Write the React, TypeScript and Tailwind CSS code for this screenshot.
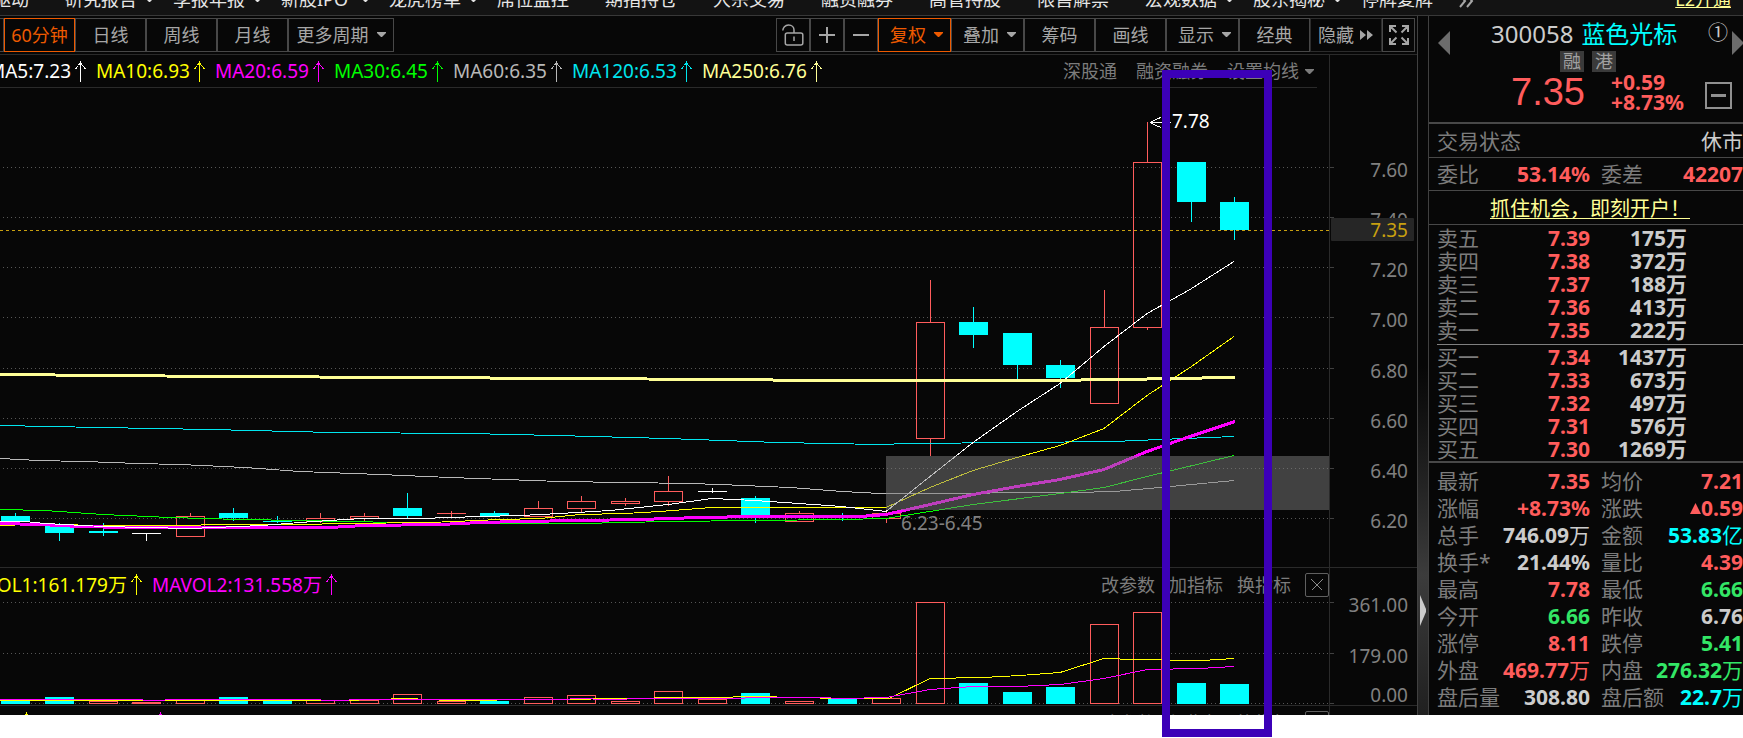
import type { ReactNode } from 'react'

const UP = '#ff5c5c'
const DOWN = '#00ffff'

type Kind = 'up' | 'down' | 'flat'

interface Bar {
  x: number
  kind: Kind
  high: number
  top: number
  bottom: number
  low: number
  volKind: Kind
  volTop: number
}

// x, candle kind, high, body top, body bottom, low, volume kind, volume top
const RAW: [number, Kind, number, number, number, number, Kind, number][] = [
  [15, 'down', 513, 516, 521, 521, 'down', 701],
  [59, 'down', 523, 525, 533, 541, 'down', 697],
  [103, 'down', 523, 531, 533, 536, 'up', 701],
  [146, 'flat', 533, 533, 534, 541, 'up', 702],
  [190, 'up', 513, 516, 537, 537, 'up', 700],
  [233, 'down', 508, 513, 518, 521, 'down', 697],
  [277, 'down', 516, 521, 522, 523, 'down', 701],
  [320, 'up', 513, 518, 522, 523, 'up', 700],
  [364, 'up', 513, 516, 519, 521, 'up', 700],
  [407, 'down', 493, 508, 516, 518, 'up', 694],
  [451, 'up', 511, 513, 514, 518, 'up', 701],
  [494, 'down', 511, 513, 516, 516, 'down', 701],
  [538, 'up', 501, 508, 517, 517, 'up', 697],
  [581, 'up', 496, 501, 509, 513, 'up', 695],
  [625, 'up', 498, 501, 504, 506, 'up', 701],
  [668, 'up', 476, 491, 502, 506, 'up', 691],
  [712, 'flat', 488, 491, 492, 493, 'up', 699],
  [755, 'down', 496, 498, 518, 523, 'down', 693],
  [799, 'up', 511, 513, 522, 522, 'up', 701],
  [842, 'down', 513, 517, 518, 521, 'down', 698],
  [886, 'up', 511, 513, 519, 523, 'up', 698],
  [930, 'up', 280, 322, 439, 456, 'up', 602],
  [973, 'down', 307, 322, 335, 348, 'down', 683],
  [1017, 'down', 333, 333, 365, 379, 'down', 692],
  [1060, 'down', 360, 365, 378, 388, 'down', 687],
  [1104, 'up', 290, 327, 404, 404, 'up', 624],
  [1147, 'up', 122, 162, 328, 330, 'up', 612],
  [1191, 'down', 162, 162, 202, 222, 'down', 683],
  [1234, 'down', 197, 202, 230, 240, 'down', 684],
]

const BARS: Bar[] = RAW.map(([x, kind, high, top, bottom, low, volKind, volTop]) => ({
  x, kind, high, top, bottom, low, volKind, volTop,
}))

const MA_LINES = [
  { color: '#b8b8b8', width: 1, points: '0,458 38,460 82,461 114,462 136,463 180,464 245,467 300,471 380,474 450,477 560,481 625,482 690,483 720,484 790,487 842,491 880,493 908,493 1075,492 1114,491 1160,487 1234,480' },
  { color: '#00e5ee', width: 1, points: '0,425 100,427 210,429 333,432 467,433 556,435 667,438 778,442 880,444 908,443 1017,442 1114,441 1160,439 1234,436' },
  { color: '#00ff00', width: 1, points: '0,509 45,510 103,514 170,517 240,519 300,520 345,521 400,522 450,523 580,523 668,521 755,520 842,519 886,518 973,504 1060,493 1104,487 1147,476 1234,455' },
  { color: '#ffff00', width: 1, points: '0,525 30,524 125,525 190,525 212,524 300,524 345,523 430,522 500,519 540,518 580,514 625,513 660,511 712,507 860,507 886,507 930,487 973,470 1017,457 1060,445 1104,428 1147,395 1190,367 1234,336' },
  { color: '#ff00ff', width: 3, points: '0,523 40,524 80,526 125,527 330,527 364,525 440,524 480,522 520,521 580,520 640,519 668,518 700,517 755,516 860,516 886,514 930,504 973,494 1017,486 1060,479 1104,469 1147,451 1190,436 1235,421' },
  { color: '#ffffff', width: 1, points: '0,521 25,521 45,523 103,526 190,528 262,525 300,522 345,519 364,518 420,518 450,517 480,516 520,515 560,513 610,510 668,504 712,498 755,500 799,503 842,506 886,511 930,476 973,442 1017,411 1060,383 1104,346 1147,313 1190,289 1234,261' },
  { color: '#ffff96', width: 3, points: '0,374 110,375 220,376 417,377 560,378 733,379 811,380 1038,380 1125,379 1170,378 1235,377' },
]

const VOL_LINES = [
  { color: '#ffff00', points: '0,700 190,700 343,700 407,698 450,700 640,698 668,697 712,697 755,696 842,698 889,698 930,678 983,677 1020,675 1060,672 1104,658 1135,659 1202,660 1234,658' },
  { color: '#ff00ff', points: '0,699 125,699 160,700 170,699 299,699 343,700 355,699 560,699 580,698 605,699 650,698 730,698 760,697 820,697 842,698 886,697 930,689 973,686 1017,686 1060,684 1104,678 1147,669 1200,668 1234,666' },
]

const PRICE_TICKS = [
  { y: 167, label: '7.60' },
  { y: 217, label: '7.40' },
  { y: 267, label: '7.20' },
  { y: 317, label: '7.00' },
  { y: 368, label: '6.80' },
  { y: 418, label: '6.60' },
  { y: 468, label: '6.40' },
  { y: 518, label: '6.20' },
]

const VOL_TICKS = [
  { y: 602, textY: 612, label: '361.00' },
  { y: 653, textY: 663, label: '179.00' },
  { y: 703, textY: 702, label: '0.00' },
]

const MENU = [
  { label: '题材驱动' },
  { label: '研究报告', arrow: true },
  { label: '季报年报', arrow: true },
  { label: '新股IPO', arrow: true },
  { label: '龙虎榜单', arrow: true },
  { label: '席位监控' },
  { label: '期指持仓' },
  { label: '大宗交易' },
  { label: '融资融券' },
  { label: '高管持股' },
  { label: '限售解禁' },
  { label: '宏观数据', arrow: true },
  { label: '股东揭秘', arrow: true },
  { label: '停牌复牌' },
]

const MA_LEGEND = [
  { text: 'MA5:7.23', cls: 'w-[108px] text-white' },
  { text: 'MA10:6.93', cls: 'w-[119px] text-[#ffff00]' },
  { text: 'MA20:6.59', cls: 'w-[119px] text-[#ff00ff]' },
  { text: 'MA30:6.45', cls: 'w-[119px] text-[#00ff00]' },
  { text: 'MA60:6.35', cls: 'w-[119px] text-[#b8b8b8]' },
  { text: 'MA120:6.53', cls: 'w-[130px] text-[#00e5ee]' },
  { text: 'MA250:6.76', cls: 'w-[130px] text-[#ffff96]' },
]

const ASKS = [
  ['卖五', '7.39', '175万'],
  ['卖四', '7.38', '372万'],
  ['卖三', '7.37', '188万'],
  ['卖二', '7.36', '413万'],
  ['卖一', '7.35', '222万'],
]

const BIDS = [
  ['买一', '7.34', '1437万'],
  ['买二', '7.33', '673万'],
  ['买三', '7.32', '497万'],
  ['买四', '7.31', '576万'],
  ['买五', '7.30', '1269万'],
]

const RED = 'text-[#ff5c5c]'
const GREEN = 'text-[#33e666]'
const GREY = 'text-[#cccccc]'
const CYAN = 'text-[#00ffff]'

const STATS: { label: string; value: string; unit?: string; cls: string; rise?: boolean }[] = [
  { label: '最新', value: '7.35', cls: RED },
  { label: '均价', value: '7.21', cls: RED },
  { label: '涨幅', value: '+8.73%', cls: RED },
  { label: '涨跌', value: '0.59', cls: RED, rise: true },
  { label: '总手', value: '746.09', unit: '万', cls: GREY },
  { label: '金额', value: '53.83', unit: '亿', cls: CYAN },
  { label: '换手*', value: '21.44%', cls: GREY },
  { label: '量比', value: '4.39', cls: RED },
  { label: '最高', value: '7.78', cls: RED },
  { label: '最低', value: '6.66', cls: GREEN },
  { label: '今开', value: '6.66', cls: GREEN },
  { label: '昨收', value: '6.76', cls: GREY },
  { label: '涨停', value: '8.11', cls: RED },
  { label: '跌停', value: '5.41', cls: GREEN },
  { label: '外盘', value: '469.77', unit: '万', cls: RED },
  { label: '内盘', value: '276.32', unit: '万', cls: GREEN },
  { label: '盘后量', value: '308.80', cls: GREY },
  { label: '盘后额', value: '22.7', unit: '万', cls: CYAN },
]

function Caret() {
  return (
    <svg width="9" height="5" viewBox="0 0 9 5" className="shrink-0" fill="currentColor">
      <path d="M0 0H9V1L5 5H4L0 1Z" />
    </svg>
  )
}

function UpArrow() {
  return (
    <svg width="11" height="21" viewBox="0 0 11 21" className="shrink-0" fill="none" stroke="currentColor" shapeRendering="crispEdges">
      <path d="M5.5 0V21M5.5 1L3.5 4.5L0.5 8M5.5 1L7.5 4.5L10.5 8" />
    </svg>
  )
}

function ToolButton({ cls, active, children, label }: { cls: string; active?: boolean; children: ReactNode; label?: string }) {
  return (
    <button
      type="button"
      aria-label={label}
      className={`flex h-[34px] shrink-0 items-center justify-center gap-2 whitespace-nowrap border ${cls} ${
        active ? 'border-[#ee5a00] text-[#ee5a00]' : 'border-[#484848] text-[#a6a6a6]'
      }`}
    >
      {children}
    </button>
  )
}

function Candle({ b }: { b: Bar }) {
  const color = b.kind === 'up' ? UP : b.kind === 'down' ? DOWN : '#ffffff'
  const h = b.bottom - b.top
  return (
    <g>
      {b.high < b.top && <rect x={b.x} y={b.high} width={1} height={b.top - b.high} fill={color} />}
      {b.low > b.bottom && <rect x={b.x} y={b.bottom} width={1} height={b.low - b.bottom} fill={color} />}
      {b.kind === 'up' && h > 1 ? (
        <rect x={b.x - 13.5} y={b.top + 0.5} width={28} height={h - 1} fill="none" stroke={color} />
      ) : (
        <rect x={b.x - 14} y={b.top} width={29} height={h} fill={color} />
      )}
    </g>
  )
}

function GridLines({ ys }: { ys: number[] }) {
  return (
    <>
      {ys.map((y) => (
        <line key={y} x1="3" x2="1329" y1={y + 0.5} y2={y + 0.5} stroke="#565656" strokeDasharray="1 3" />
      ))}
    </>
  )
}

function PriceChart() {
  return (
    <svg viewBox="0 88 1329 479" preserveAspectRatio="none" className="block h-[479px] w-full" shapeRendering="crispEdges">
      <GridLines ys={PRICE_TICKS.map((t) => t.y)} />
      {BARS.map((b) => (
        <Candle key={b.x} b={b} />
      ))}
      {MA_LINES.map((l) => (
        <polyline key={l.color} points={l.points} transform="translate(0 .5)" fill="none" stroke={l.color} strokeWidth={l.width} />
      ))}
      <line x1="0" x2="1329" y1="230.5" y2="230.5" stroke="#c8a010" strokeDasharray="3 3" />
      <rect x="886" y="456" width="443" height="54" fill="#7b7b7b" fillOpacity="0.5" />
      <path d="M1150 122.5H1171M1161 117.5L1155.5 119.5L1150.5 122.5L1155.5 125.5L1161 127.5" fill="none" stroke="#ffffff" />
      <text x="1172" y="128" fontSize="19" fill="#ffffff">7.78</text>
      <text x="901" y="530" fontSize="19" fill="#808080">6.23-6.45</text>
    </svg>
  )
}

function VolumeChart() {
  return (
    <svg viewBox="0 601 1329 104" preserveAspectRatio="none" className="block h-[104px] w-full" shapeRendering="crispEdges">
      <GridLines ys={VOL_TICKS.map((t) => t.y)} />
      {BARS.map((b) =>
        b.volKind === 'up' ? (
          <rect key={b.x} x={b.x - 13.5} y={b.volTop + 0.5} width={28} height={703 - b.volTop} fill="none" stroke={UP} />
        ) : (
          <rect key={b.x} x={b.x - 14} y={b.volTop} width={29} height={704 - b.volTop} fill={DOWN} />
        ),
      )}
      {VOL_LINES.map((l) => (
        <polyline key={l.color} points={l.points} transform="translate(0 .5)" fill="none" stroke={l.color} />
      ))}
    </svg>
  )
}

function PaneHeader({ children }: { children: ReactNode }) {
  return (
    <div className="flex h-[33px] items-center overflow-hidden whitespace-nowrap">
      {children}
      <div className="ml-auto flex items-center gap-[14px] text-[#7c7c7c]">
        <button type="button">改参数</button>
        <button type="button">加指标</button>
        <button type="button">换指标</button>
        <button type="button" aria-label="关闭" className="flex h-6 w-6 items-center justify-center rounded-xs border border-[#606060]">
          <svg width="12" height="12" viewBox="0 0 12 12" stroke="#8c8c8c" shapeRendering="crispEdges">
            <path d="M0.5 0.5L11.5 11.5M11.5 0.5L0.5 11.5" />
          </svg>
        </button>
      </div>
    </div>
  )
}

function BookTable({ rows, name }: { rows: string[][]; name: string }) {
  return (
    <table aria-label={name} className="w-[258px] table-fixed border-collapse leading-[23px]">
      <tbody>
        {rows.map(([label, price, vol]) => (
          <tr key={label} className="h-[23px]">
            <th scope="row" className="w-[80px] p-0 pl-2 text-left font-normal text-[#7c7c7c]">{label}</th>
            <td className="p-0 text-right font-bold text-[#ff5c5c]">{price}</td>
            <td className="w-[97px] p-0 text-right font-bold text-[#cccccc]">{vol}</td>
          </tr>
        ))}
      </tbody>
    </table>
  )
}

function TopMenu() {
  return (
    <nav className="flex h-4 items-end overflow-hidden whitespace-nowrap border-b border-[#383838] bg-[#131313] pb-1 leading-6 text-[#e6e6e6]">
      <div className="-ml-[43px] flex shrink-0">
        {MENU.map((m) => (
          <a key={m.label} href="#" className="flex w-[108px] shrink-0 items-center">
            <span className="w-[80px]">{m.label}</span>
            {m.arrow && <Caret />}
          </a>
        ))}
      </div>
      <span className="-ml-[10px] text-[#a6a6a6]">
        <svg width="16" height="20" viewBox="0 0 16 20" fill="none" stroke="currentColor" strokeWidth="2">
          <path d="M1 4L6 10L1 16M8 4L13 10L8 16" />
        </svg>
      </span>
      <a href="#" className="ml-auto mr-3 text-[#ffff96] underline">L2开通</a>
    </nav>
  )
}

function Toolbar() {
  return (
    <div className="flex h-[39px] items-center border-b border-[#2a2a2a] pb-px">
      <div className="h-[34px] w-1 border-y border-r border-[#484848]" />
      <ToolButton cls="w-[71px]" active>60分钟</ToolButton>
      <ToolButton cls="w-[71px]">日线</ToolButton>
      <ToolButton cls="w-[71px]">周线</ToolButton>
      <ToolButton cls="w-[71px]">月线</ToolButton>
      <ToolButton cls="w-[106px]">更多周期<Caret /></ToolButton>
      <div className="ml-auto mr-[2px] flex">
        <ToolButton cls="w-[34px]" label="锁定">
          <svg width="22" height="24" viewBox="0 0 22 24" fill="none" stroke="currentColor" strokeWidth="1.5">
            <path d="M0.8 7.5C1 5 3 2 6.5 2C10 2 12 4.5 12 7V10" />
            <rect x="3.3" y="10" width="17.5" height="12" rx="2" />
            <path d="M12 13.5V18" />
          </svg>
        </ToolButton>
        <ToolButton cls="w-[34px]" label="放大">
          <svg width="18" height="18" viewBox="0 0 18 18" stroke="currentColor" strokeWidth="2">
            <path d="M9 1V17M1 9H17" />
          </svg>
        </ToolButton>
        <ToolButton cls="w-[34px]" label="缩小">
          <svg width="18" height="18" viewBox="0 0 18 18" stroke="currentColor" strokeWidth="2">
            <path d="M1 9H17" />
          </svg>
        </ToolButton>
        <ToolButton cls="w-[73px] pl-1" active>复权<Caret /></ToolButton>
        <ToolButton cls="w-[73px] pl-1">叠加<Caret /></ToolButton>
        <ToolButton cls="w-[71px]">筹码</ToolButton>
        <ToolButton cls="w-[71px]">画线</ToolButton>
        <ToolButton cls="w-[73px] pl-1">显示<Caret /></ToolButton>
        <ToolButton cls="w-[71px]">经典</ToolButton>
        <button type="button" className="flex h-[34px] w-[72px] items-center justify-center gap-[6px] border border-[#2c2c2c] text-[#a6a6a6]">
          隐藏
          <svg width="14" height="10" viewBox="0 0 14 10" fill="currentColor">
            <path d="M0 0L6 5L0 10ZM7 0L13 5L7 10Z" />
          </svg>
        </button>
        <ToolButton cls="w-[33px]" label="全屏">
          <svg width="22" height="22" viewBox="0 0 22 22" fill="none" stroke="currentColor" strokeWidth="2">
            <path d="M2 8V2H8M2 2L8.5 8.5M14 2H20V8M20 2L13.5 8.5M2 14V20H8M2 20L8.5 13.5M20 14V20H14M20 20L13.5 13.5" />
          </svg>
        </ToolButton>
      </div>
    </div>
  )
}

function ChartPanes() {
  return (
    <>
      <section className="flex border-b border-[#2a2a2a]">
        <div className="min-w-0 flex-1 border-r border-[#2a2a2a]">
          <div className="mr-3 flex h-[33px] items-center overflow-hidden whitespace-nowrap border-b border-[#2a2a2a]">
            <div className="-ml-[12px] flex text-[19px]">
              {MA_LEGEND.map((m) => (
                <span key={m.text} className={`flex shrink-0 items-center justify-between pr-[10px] ${m.cls}`}>
                  {m.text}
                  <UpArrow />
                </span>
              ))}
            </div>
            <div className="ml-auto mr-[3px] flex gap-[19px] text-[#7c7c7c]">
              <a href="#">深股通</a>
              <a href="#">融资融券</a>
              <button type="button" className="flex items-center gap-[6px]">设置均线<Caret /></button>
            </div>
          </div>
          <PriceChart />
        </div>
        <svg viewBox="1330 55 87 512" className="block h-[512px] w-[87px] shrink-0" fontSize="19" fill="#808080" textAnchor="end">
          {PRICE_TICKS.map((t) => (
            <g key={t.label}>
              <rect x="1330" y={t.y} width="4" height="1" fill="#404040" />
              <text x="1408" y={t.y + 10}>{t.label}</text>
            </g>
          ))}
          <rect x="1331" y="218" width="83" height="23" rx="1" fill="#262626" />
          <text x="1408" y="237" fill="#c8a010">7.35</text>
        </svg>
      </section>

      <section className="flex border-b border-[#2a2a2a]">
        <div className="min-w-0 flex-1 border-r border-[#2a2a2a]">
          <PaneHeader>
            <span className="-ml-[43px] flex w-[195px] shrink-0 items-center justify-between pr-[10px] text-[19px] text-[#ffff00]">
              MAVOL1:161.179万
              <UpArrow />
            </span>
            <span className="flex w-[195px] shrink-0 items-center justify-between pr-[10px] text-[19px] text-[#ff00ff]">
              MAVOL2:131.558万
              <UpArrow />
            </span>
          </PaneHeader>
          <VolumeChart />
        </div>
        <svg viewBox="1330 568 87 137" className="block h-[137px] w-[87px] shrink-0" fontSize="19" fill="#808080" textAnchor="end">
          {VOL_TICKS.map((t) => (
            <g key={t.label}>
              <rect x="1330" y={t.y} width="4" height="1" fill="#404040" />
              <text x="1408" y={t.textY}>{t.label}</text>
            </g>
          ))}
        </svg>
      </section>

      <section className="flex h-[9px] overflow-hidden">
        <div className="min-w-0 flex-1 border-r border-[#2a2a2a]">
          <PaneHeader>
            <span className="ml-[21px] text-[#ffff00]"><UpArrow /></span>
            <span className="ml-[123px] text-[#ff00ff]"><UpArrow /></span>
          </PaneHeader>
        </div>
        <div className="w-[87px] shrink-0" />
      </section>
    </>
  )
}

function QuotePanel() {
  return (
    <aside className="w-[314px] shrink-0 overflow-hidden whitespace-nowrap text-[21px]">
      <div className="flex h-[106px] pl-[9px]">
        <button type="button" aria-label="上一只" className="mt-[15px] h-6 text-[#6c6c6c]">
          <svg width="12" height="24" viewBox="0 0 12 24" fill="currentColor"><path d="M12 0V24L0 12Z" /></svg>
        </button>
        <div className="ml-[41px] flex flex-col">
          <div className="flex h-[35px] items-center gap-2 text-2xl">
            <span className="text-[#cccccc]">300058</span>
            <span className="text-[#00ffff]">蓝色光标</span>
          </div>
          <div className="ml-[69px] flex gap-2 text-lg leading-[21px] text-[#a0a0a0]">
            <span className="h-[21px] w-6 bg-[#3a3a3a] text-center">融</span>
            <span className="h-[21px] w-6 bg-[#3a3a3a] text-center">港</span>
          </div>
          <div className="ml-5 flex items-center text-[#ff5c5c]">
            <span className="w-[100px] font-['Liberation_Sans',sans-serif] text-[38px] leading-[40px]">7.35</span>
            <span className="text-[21px] leading-[20px] font-bold">+0.59<br />+8.73%</span>
          </div>
        </div>
        <div className="ml-auto flex flex-col items-end">
          <div className="flex items-start gap-1">
            <span className="mt-1 text-[20px] leading-[26px] text-[#cccccc]">①</span>
            <button type="button" aria-label="下一只" className="mt-[15px] h-6 text-[#6c6c6c]">
              <svg width="11" height="24" viewBox="0 0 11 24" fill="currentColor"><path d="M0 0V24L11 13V11Z" /></svg>
            </button>
          </div>
          <button type="button" aria-label="收起" className="mr-[11px] mt-[27px] flex h-[27px] w-[27px] items-center justify-center border-2 border-[#909090]">
            <span className="h-[3px] w-[15px] bg-[#909090]" />
          </button>
        </div>
      </div>

      <div className="flex h-[35px] items-center justify-between border-t-2 border-[#484848] pl-2">
        <span className="text-[#7c7c7c]">交易状态</span>
        <span className="text-[#cccccc]">休市</span>
      </div>
      <div className="grid h-[33px] grid-cols-[153px_1fr] items-center gap-x-[11px] border-t border-[#484848] pl-2">
        <div className="flex justify-between">
          <span className="text-[#7c7c7c]">委比</span>
          <span className="font-bold text-[#ff5c5c]">53.14%</span>
        </div>
        <div className="flex justify-between">
          <span className="text-[#7c7c7c]">委差</span>
          <span className="font-bold text-[#ff5c5c]">42207</span>
        </div>
      </div>
      <div className="flex h-[35px] items-center border-y border-[#484848] pl-[61px]">
        <a href="#" className="block border-b border-[#ffff96] pt-[3px] text-[20px] leading-[18px] text-[#ffff96]">抓住机会，即刻开户！</a>
      </div>

      <div className="border-b-2 border-[#484848] pt-[2px]">
        <BookTable name="卖盘" rows={ASKS} />
        <div className="ml-2 mt-[2px] mb-px border-t border-[#808080]" />
        <BookTable name="买盘" rows={BIDS} />
      </div>

      <dl className="grid grid-cols-[153px_1fr] gap-x-[11px] pt-[5px] pl-2 leading-[27px]">
        {STATS.map((s) => (
          <div key={s.label} className="flex h-[27px] justify-between">
            <dt className="w-0 text-[#7c7c7c]">{s.label}</dt>
            <dd className={`flex items-center font-bold ${s.cls}`}>
              {s.rise && (
                <svg width="11" height="11" viewBox="0 0 11 11" fill="currentColor"><path d="M5.5 0L11 11H0Z" /></svg>
              )}
              {s.value}
              {s.unit && <span className="font-normal">{s.unit}</span>}
            </dd>
          </div>
        ))}
      </dl>
    </aside>
  )
}

export default function App() {
  return (
    <div className="relative overflow-hidden bg-white pb-[23px] font-['Noto_Sans','Noto_Sans_CJK_SC',sans-serif] text-lg leading-6">
      <div className="bg-[#070707]">
        <TopMenu />
        <div className="flex">
          <main className="min-w-0 flex-1">
            <Toolbar />
            <ChartPanes />
          </main>
          <div className="flex w-3 shrink-0 flex-col border-x border-[#404040] bg-linear-to-b from-[#070707] from-50% via-[#3c3c3c] via-80% to-[#202020] pt-[579px]">
            <button type="button" aria-label="收起侧栏" className="ml-[2px] text-[#cccccc]">
              <svg width="6" height="31" viewBox="0 0 6 31" fill="currentColor"><path d="M0 0L6 14V17L0 31Z" /></svg>
            </button>
          </div>
          <QuotePanel />
        </div>
      </div>
      <div className="pointer-events-none absolute left-[1162px] top-[70px] h-[667px] w-[110px] border-8 border-[#3c00b8]" />
    </div>
  )
}
